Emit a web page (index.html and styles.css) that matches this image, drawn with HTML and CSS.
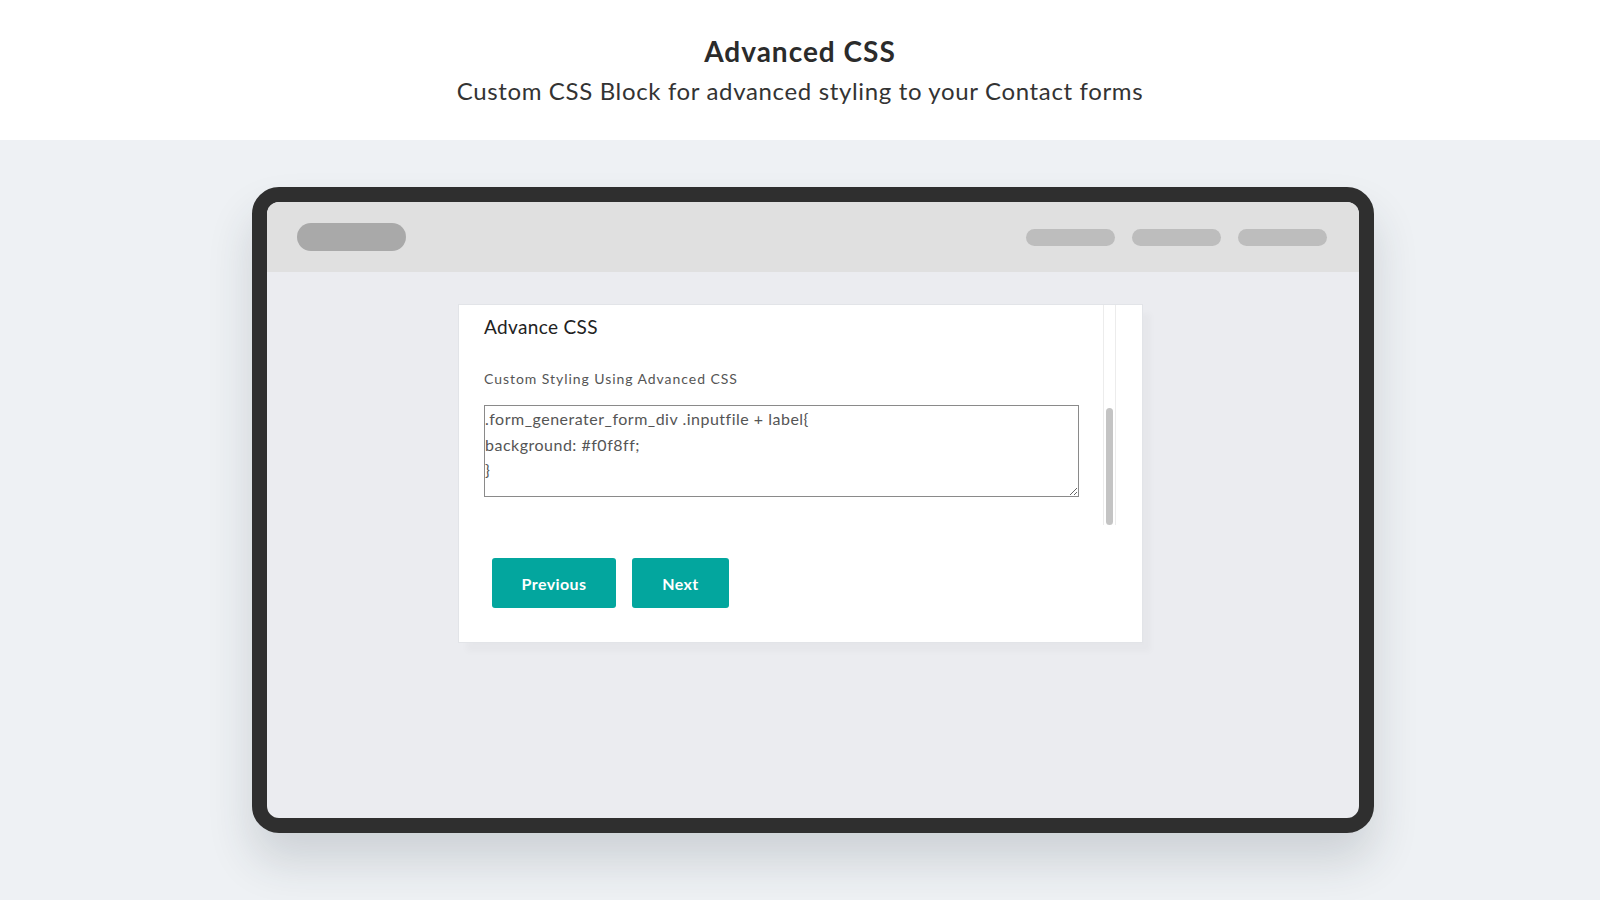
FILE: index.html
```html
<!DOCTYPE html>
<html lang="en">
<head>
  <meta charset="UTF-8">
  <title>Advanced CSS</title>
  <link rel="stylesheet" href="styles.css">
</head>
<body>
  <header class="intro">
    <h1>Advanced CSS</h1>
    <p>Custom CSS Block for advanced styling to your Contact forms</p>
  </header>

  <main class="stage">
    <div class="device">
      <div class="topbar">
        <span class="pill pill-logo"></span>
        <div class="nav">
          <span class="pill"></span>
          <span class="pill"></span>
          <span class="pill"></span>
        </div>
      </div>

      <div class="screen">
        <div class="card">
          <div class="card-scroll">
            <div class="card-body">
              <h2>Advance CSS</h2>
              <label for="customCss">Custom Styling Using Advanced CSS</label>
              <textarea id="customCss">.form_generater_form_div .inputfile + label{
background: #f0f8ff;
}</textarea>
            </div>
            <div class="scrollbar"><div class="thumb"></div></div>
          </div>

          <div class="actions">
            <button type="button" class="btn btn-prev">Previous</button>
            <button type="button" class="btn btn-next">Next</button>
          </div>
        </div>
      </div>
    </div>
  </main>
</body>
</html>
```

FILE: styles.css
```css
body {
  margin: 0;
  width: 1600px;
  height: 900px;
  overflow: hidden;
  font-family: Lato, "Open Sans", sans-serif;
  background-color: #eef1f4;
}

.intro {
  height: 140px;
  background: #fff;
  text-align: center;
  color: #333;
  padding-top: 34px;
  box-sizing: border-box;
}

.intro h1 {
  margin: 0;
  font-size: 28px;
  font-weight: bold;
  line-height: 34px;
  letter-spacing: 1px;
  color: #2b2b2b;
}

.intro p {
  margin: 8px 0 0;
  font-size: 24px;
  line-height: 30px;
  letter-spacing: 0.65px;
  color: #333;
}

.stage {
  padding-top: 47px;
  padding-left: 252px;
}

.device {
  width: 1122px;
  height: 646px;
  box-sizing: border-box;
  border: 15px solid #2f2f2f;
  border-radius: 27px;
  overflow: hidden;
  background: #ebecf0;
  box-shadow: 0 28px 45px rgba(40, 50, 60, 0.16);
}

.topbar {
  height: 70px;
  background: #e0e0e0;
  display: flex;
  align-items: center;
  justify-content: space-between;
  padding: 0 32px 0 30px;
}

.pill {
  display: block;
  width: 89px;
  height: 17px;
  border-radius: 9px;
  background: #bdbdbd;
}

.pill-logo {
  width: 109px;
  height: 28px;
  border-radius: 14px;
  background: #a9a9a9;
}

.nav {
  display: flex;
  gap: 17px;
}

.screen {
  padding: 32px 0 0 191px;
}

.card {
  width: 685px;
  height: 339px;
  box-sizing: border-box;
  background: #fff;
  border: 1px solid #e2e4e8;
  box-shadow: 8px 9px 6px rgba(0, 0, 0, 0.025);
}

.card-scroll {
  display: flex;
  height: 220px;
}

.card-body {
  flex: 1;
  padding: 10px 24px 0 25px;
}

.card-body h2 {
  margin: 0;
  font-size: 19px;
  font-weight: normal;
  line-height: 24px;
  letter-spacing: 0.35px;
  color: #222;
}

.card-body label {
  display: block;
  margin-top: 31px;
  font-size: 14px;
  line-height: 18px;
  letter-spacing: 0.95px;
  color: #555;
}

.card-body textarea {
  display: block;
  margin-top: 17px;
  width: 595px;
  height: 92px;
  box-sizing: border-box;
  padding: 0;
  border: 1px solid #8a8a8a;
  border-radius: 0;
  font-family: Lato, sans-serif;
  font-size: 16px;
  line-height: 25.5px;
  letter-spacing: 0.5px;
  color: #555;
  resize: both;
  overflow: hidden;
}

.scrollbar {
  width: 13px;
  margin-right: 26px;
  border-left: 1px solid #ececec;
  border-right: 1px solid #ececec;
}

.thumb {
  width: 7px;
  height: 117px;
  margin: 103px auto 0;
  border-radius: 4px;
  background: #c4c4c4;
}

.actions {
  display: flex;
  gap: 16px;
  padding: 33px 0 0 33px;
}

.btn {
  height: 50px;
  border: none;
  border-radius: 3px;
  background-color: #03a69e;
  color: #fff;
  font-family: Lato, sans-serif;
  font-size: 16px;
  font-weight: bold;
  letter-spacing: 0.4px;
  cursor: pointer;
}

.btn-prev {
  width: 124px;
}

.btn-next {
  width: 97px;
}
```
